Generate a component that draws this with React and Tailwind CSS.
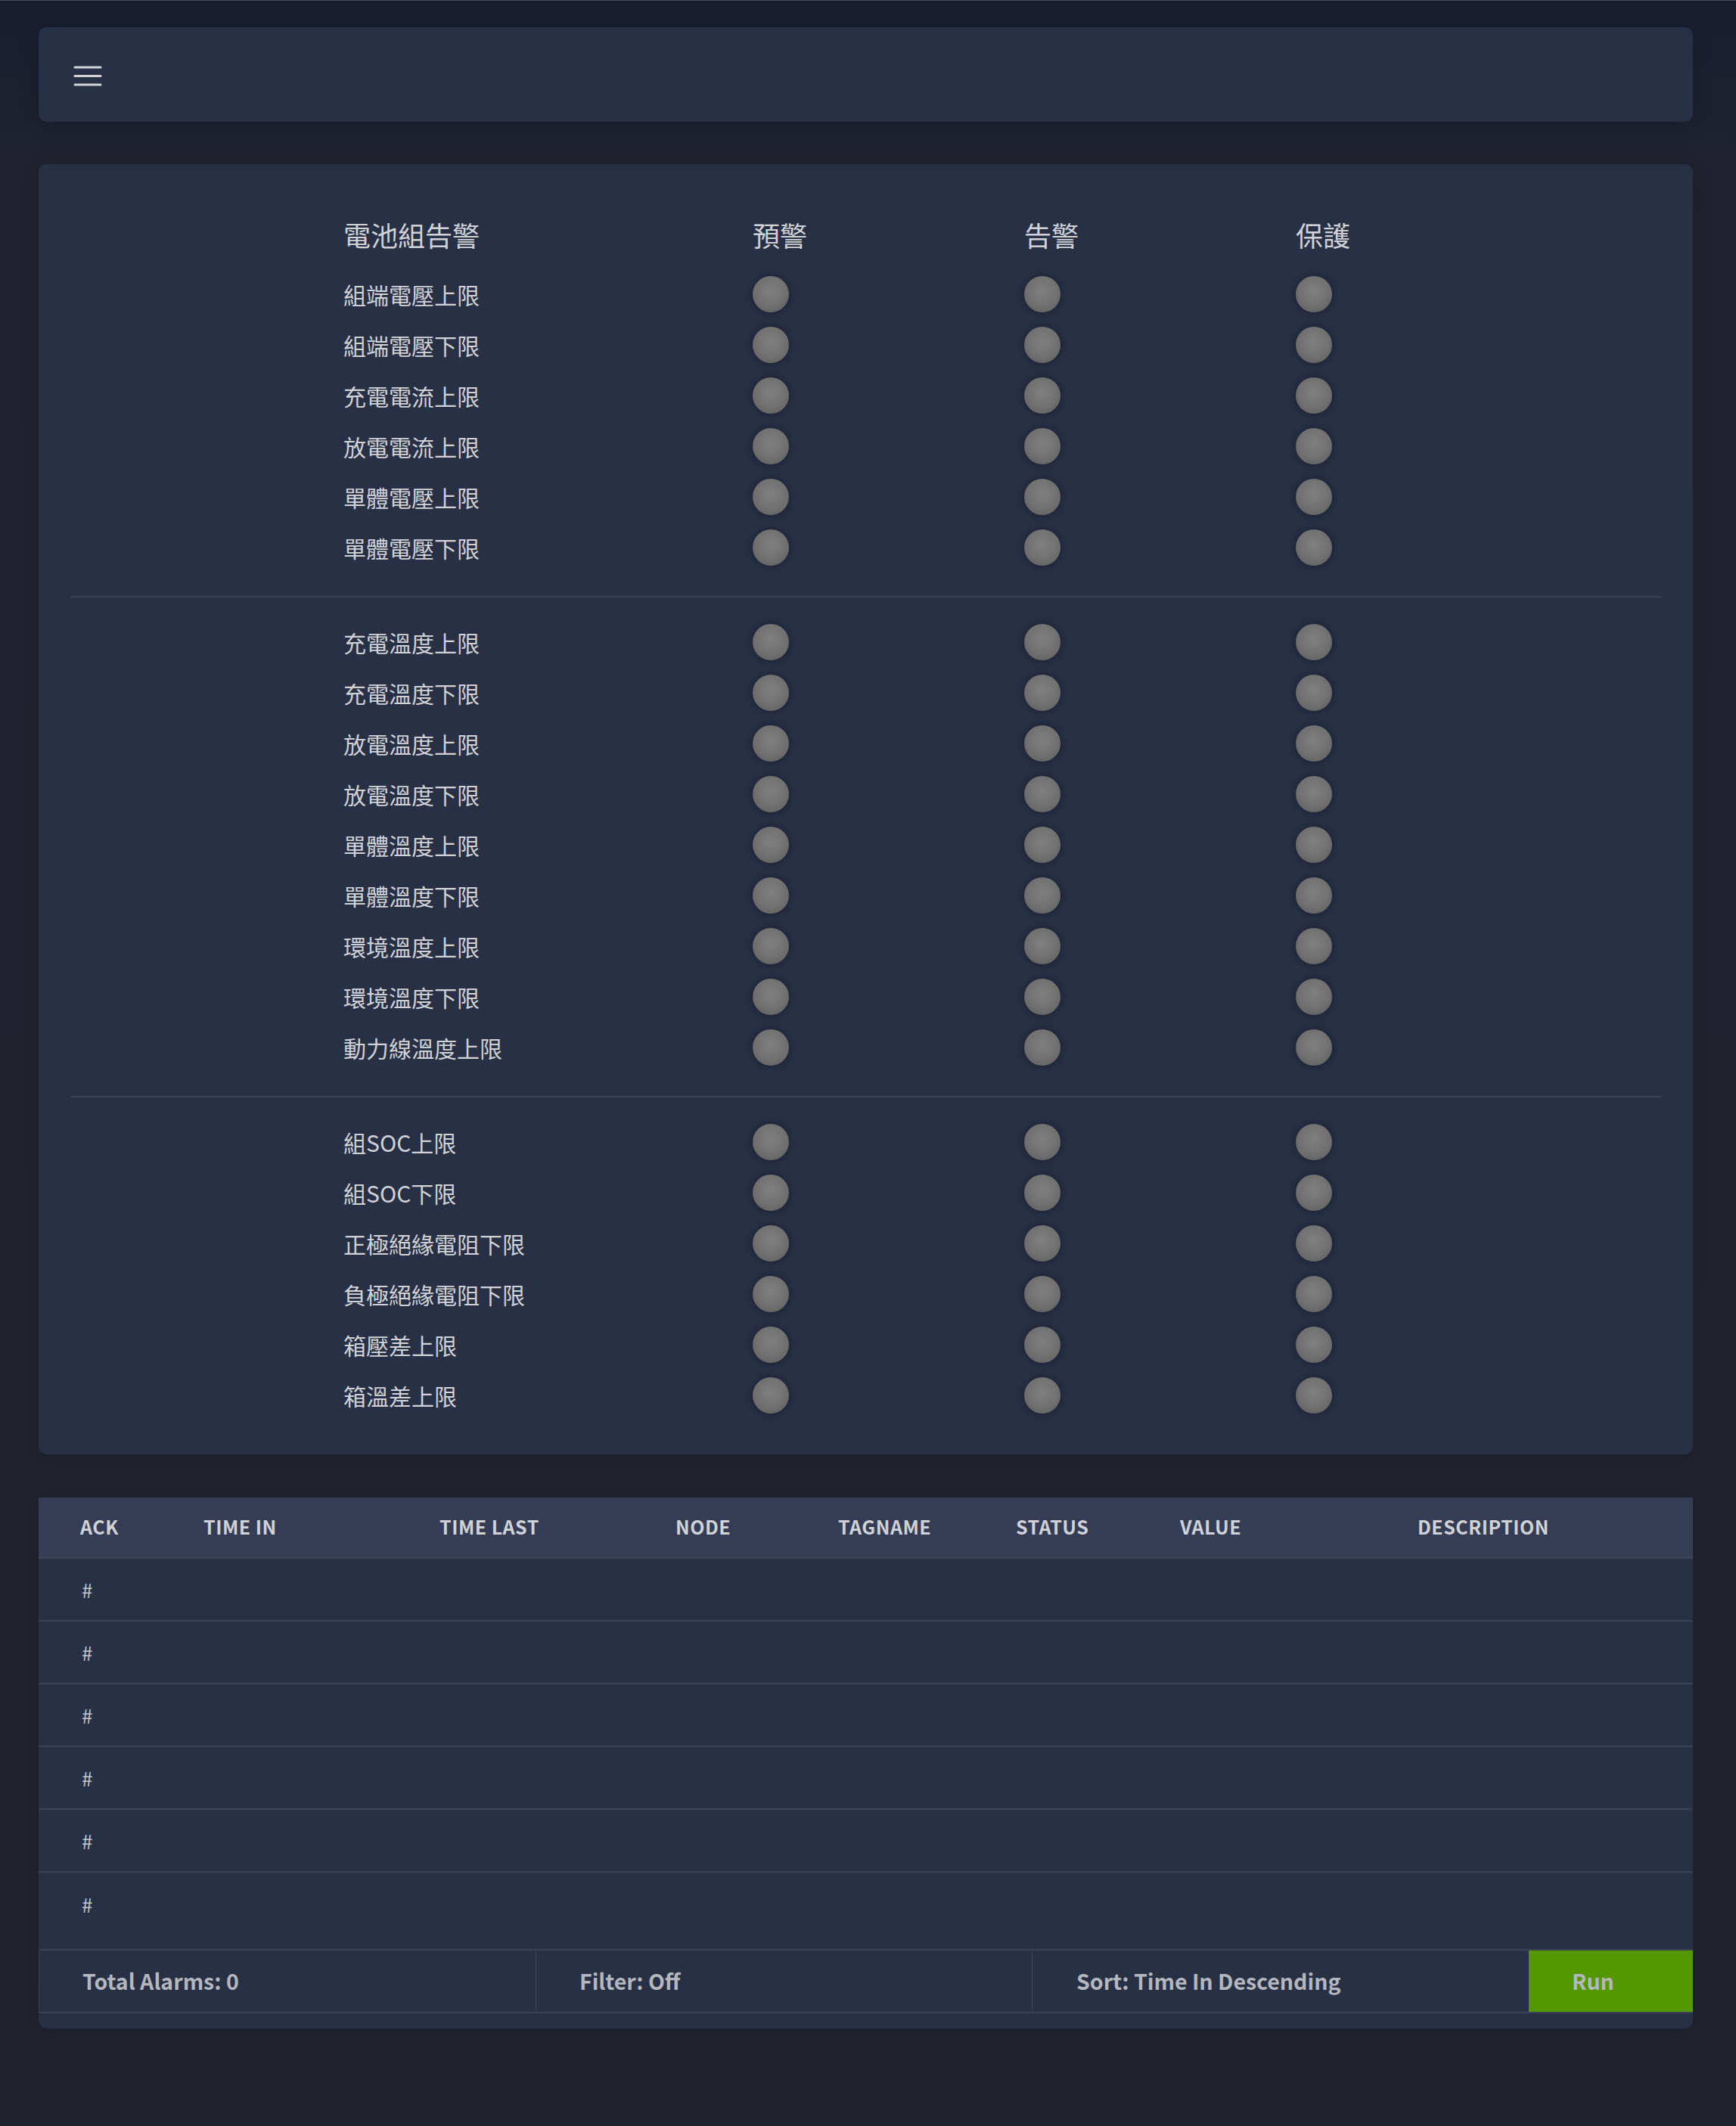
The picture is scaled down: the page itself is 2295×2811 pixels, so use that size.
import React from 'react';

const groups = [
  ['組端電壓上限', '組端電壓下限', '充電電流上限', '放電電流上限', '單體電壓上限', '單體電壓下限'],
  ['充電溫度上限', '充電溫度下限', '放電溫度上限', '放電溫度下限', '單體溫度上限', '單體溫度下限', '環境溫度上限', '環境溫度下限', '動力線溫度上限'],
  ['組SOC上限', '組SOC下限', '正極絕緣電阻下限', '負極絕緣電阻下限', '箱壓差上限', '箱溫差上限'],
];

const columns = ['ACK', 'TIME IN', 'TIME LAST', 'NODE', 'TAGNAME', 'STATUS', 'VALUE', 'DESCRIPTION'];

function Lamp() {
  return (
    <span className="block h-[48px] w-[48px] rounded-full bg-[radial-gradient(circle_at_50%_42%,#808080_0%,#727272_50%,#5a5a5a_100%)] shadow-[0_0_6px_2px_rgba(20,24,36,0.5)]" />
  );
}

function AlarmRow({ label }) {
  return (
    <div className="grid h-[67px] grid-cols-[541px_359px_359px_359px] items-center">
      <span className="text-[30px] leading-none text-[#d0d2d6]">{label}</span>
      <Lamp />
      <Lamp />
      <Lamp />
    </div>
  );
}

export default function App() {
  return (
    <div className="min-h-[2811px] w-full border-t border-[#474c5a] bg-[linear-gradient(180deg,#181e30_0px,#20232f_220px,#21242f_100%)] pl-[51px] pr-[57px] pt-[35px] font-['Noto_Sans_CJK_TC','Noto_Sans',sans-serif]">
      {/* Top bar */}
      <div className="flex h-[125px] items-center rounded-[11px] bg-[#283046] pl-[46px] pt-[3px] shadow-[0_4px_24px_rgba(0,0,0,0.18)]">
        <svg width="38" height="27" viewBox="0 0 38 27" fill="none" stroke="#d0d2d6" strokeWidth="3" strokeLinecap="round">
          <line x1="2" y1="2" x2="36" y2="2" />
          <line x1="2" y1="13.5" x2="36" y2="13.5" />
          <line x1="2" y1="25" x2="36" y2="25" />
        </svg>
      </div>

      {/* Alarm matrix */}
      <div className="mt-[56px] rounded-[11px] bg-[#283046] px-[42px] pb-[45px] pt-[47px] shadow-[0_4px_24px_rgba(0,0,0,0.18)]">
        <div className="ml-[361px] grid h-[91px] grid-cols-[541px_359px_359px_359px] items-center text-[36px] leading-none text-[#d0d2d6]">
          <span>電池組告警</span>
          <span>預警</span>
          <span>告警</span>
          <span>保護</span>
        </div>
        {groups.map((rows, gi) => (
          <div key={gi}>
            {gi > 0 && <div className="mb-[25px] mt-[31px] h-[2px] bg-[#3b4253]" />}
            <div className="ml-[361px]">
              {rows.map((label) => (
                <AlarmRow key={label} label={label} />
              ))}
            </div>
          </div>
        ))}
      </div>

      {/* Alarm table */}
      <div className="mt-[57px] overflow-hidden rounded-b-[11px] bg-[#283046] pb-[20px] shadow-[0_4px_24px_rgba(0,0,0,0.18)]">
        <div className="grid h-[81px] grid-cols-[163px_312px_312px_215px_235px_217px_314px_1fr] items-center border-b-4 border-[#3b4253] bg-[#343d55] text-[25px] font-semibold uppercase tracking-[0.5px] text-[#d0d2d6]">
          {columns.map((c) => (
            <span key={c} className="pl-[55px]">{c}</span>
          ))}
        </div>
        {[0, 1, 2, 3, 4, 5].map((i) => (
          <div key={i} className={`flex h-[83px] items-center pl-[57px] text-[26px] text-[#c4c6cc] ${i < 5 ? 'border-b-2 border-[#3b4253]' : ''}`}>
            #
          </div>
        ))}
        <div className="mt-[18px] grid h-[85px] grid-cols-[657px_656px_656px_1fr] border-y-2 border-l border-[#3b4253] text-[28.5px] font-semibold text-[#b4b7bd]">
          <div className="flex items-center border-r border-[#3b4253] pl-[57px]">Total Alarms: 0</div>
          <div className="flex items-center border-r border-[#3b4253] pl-[57px]">Filter: Off</div>
          <div className="flex items-center pl-[58px]">Sort: Time In Descending</div>
          <div className="flex items-center bg-[#539800] pl-[57px]">Run</div>
        </div>
      </div>
    </div>
  );
}
